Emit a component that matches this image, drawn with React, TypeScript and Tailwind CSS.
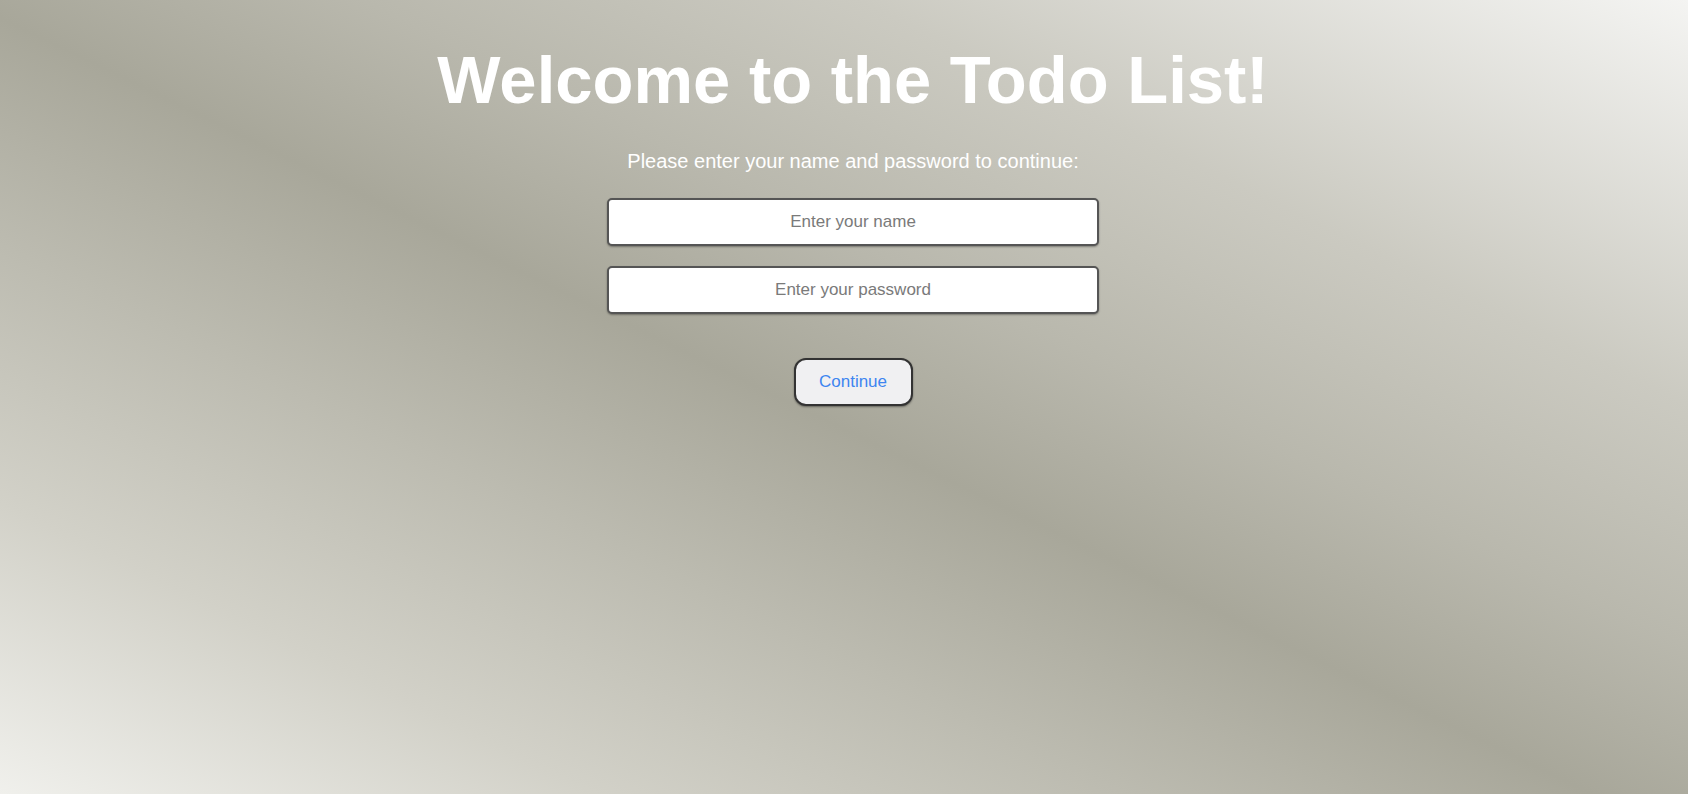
export default function App() {
  return (
    <div className="h-screen w-full overflow-hidden bg-[linear-gradient(26deg,#f0f0ec_0%,#d2d1c8_18%,#bcbbb0_34%,#a8a79a_48%,#b9b8ad_60%,#cbcac1_75%,#f4f4f2_100%)] font-['Liberation_Sans',Arial,sans-serif]">
      <div className="flex flex-col items-center pl-[18px] pt-[41px]">
        <h1 className="text-[67px] font-bold leading-[normal] text-white">
          Welcome to the Todo List!
        </h1>
        <p className="mt-[32px] text-[20px] leading-[normal] text-white">
          Please enter your name and password to continue:
        </p>

        <form className="mt-[25px] flex flex-col items-center" onSubmit={(e) => e.preventDefault()}>
          <input
            type="text"
            placeholder="Enter your name"
            className="h-12 w-[492px] rounded-[5px] border-2 border-[#555] bg-white text-center text-[17px] text-[#333] shadow-[0_1px_2px_rgba(0,0,0,0.35)] outline-none placeholder:text-[#7a7a7a]"
          />
          <input
            type="password"
            placeholder="Enter your password"
            className="mt-5 h-12 w-[492px] rounded-[5px] border-2 border-[#555] bg-white text-center text-[17px] text-[#333] shadow-[0_1px_2px_rgba(0,0,0,0.35)] outline-none placeholder:text-[#7a7a7a]"
          />
          <button
            type="submit"
            className="mt-[44px] h-12 w-[119px] rounded-[12px] border-2 border-[#333] bg-[#f0f0f2] text-[17px] text-[#3d85f0] shadow-[0_1px_2px_rgba(0,0,0,0.4)]"
          >
            Continue
          </button>
        </form>
      </div>
    </div>
  );
}
